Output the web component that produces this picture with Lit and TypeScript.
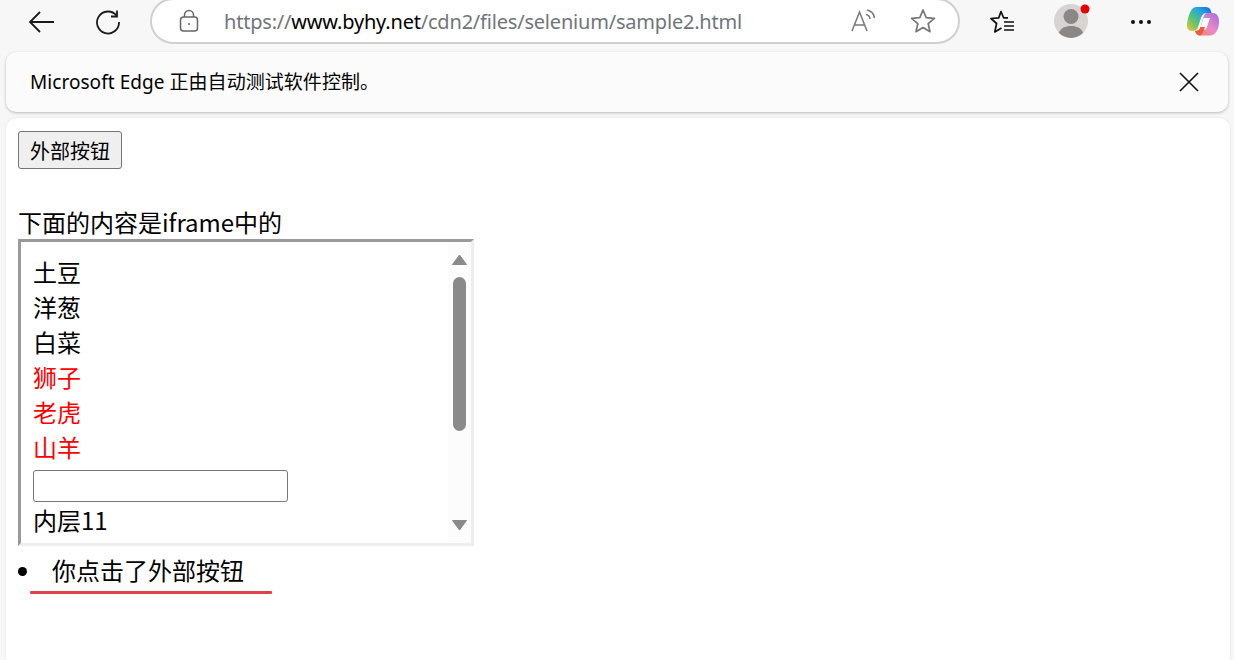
import { LitElement, html, css, svg } from "lit";
import { customElement } from "lit/decorators.js";

@customElement("app-root")
export class AppRoot extends LitElement {
  static styles = css`
    :host { display: block; width: 1234px; height: 660px; overflow: hidden; background: #f7f7f7; font-family: "Noto Sans", "Noto Sans CJK SC", sans-serif; color: #000; }
    .toolbar { height: 44px; display: flex; align-items: center; }
    .icon { display: block; flex: none; }
    .back { margin-left: 28px; }
    .reload { margin-left: 39px; }
    .omni { box-sizing: border-box; flex: none; align-self: flex-end; height: 46px; width: 810px; margin-left: 29px; border: 2px solid #d0d0d0; border-radius: 23px; background: #fff; display: flex; align-items: center; padding-left: 27px; }
    .url { margin-left: 25px; font-size: 20px; letter-spacing: -0.2px; color: #70757a; white-space: nowrap; line-height: 28px; margin-top: 2px; }
    .url b { font-weight: 400; color: #000; }
    .read { margin-left: auto; }
    .star { margin-left: 35px; margin-right: 22px; }
    .favs { margin-left: 29px; }
    .avatar { margin-left: 39px; }
    .more { margin-left: 40px; }
    .copilot { margin-left: 34px; margin-top: -2px; }
    .infobar { box-sizing: border-box; margin: 8px 6px 0; height: 60px; background: #fbfbfb; border-radius: 10px; box-shadow: 0 1px 3px rgba(0,0,0,.25); display: flex; align-items: center; justify-content: space-between; padding: 0 29px 0 24px; }
    .infobar span { font-size: 19px; line-height: 26px; letter-spacing: 0.05px; }
    .page { box-sizing: border-box; margin: 6px 4px 0 6px; height: 560px; background: #fff; border-radius: 10px 10px 0 0; padding: 13px 12px 0; box-shadow: 0 0 2px rgba(0,0,0,.12); }
    .btn { display: block; box-sizing: border-box; width: 104px; height: 38px; padding: 0; background: #efefef; border: 1px solid #767676; border-radius: 3px; font: 20px/29px "Noto Sans CJK SC", sans-serif; color: #000; }
    .caption { margin-top: 39px; height: 31px; font: 24px/27px "Noto Sans CJK SC", sans-serif; white-space: nowrap; }
    .frame { box-sizing: border-box; position: relative; width: 456px; height: 307px; border: 3px solid; border-color: #9a9a9a #eeeeee #eeeeee #9a9a9a; overflow: hidden; background: #fff; padding: 12px 0 0 12px; font: 24px/35px "Noto Sans CJK SC", sans-serif; }
    .row { height: 35px; white-space: nowrap; }
    .red { color: #f00; }
    .input { box-sizing: border-box; width: 255px; height: 32px; margin: 6px 0 0; border: 1px solid #767676; border-radius: 3px; background: #fff; }
    .sb { position: absolute; top: 0; right: 0; bottom: 0; width: 23px; background: #fcfcfc; display: flex; flex-direction: column; align-items: center; }
    .arrow-up { margin-top: 12px; }
    .thumb { width: 13px; height: 154px; margin-top: 12px; background: #8a8a8a; border-radius: 7px; }
    .arrow-down { margin-top: auto; margin-bottom: 12px; }
    ul { list-style: none; margin: 0; padding: 6px 0 0 0; }
    li { position: relative; height: 36px; display: flex; align-items: center; padding-left: 34px; font: 24px/36px "Noto Sans CJK SC", sans-serif; white-space: nowrap; }
    .bullet { position: absolute; left: 0; top: 50%; width: 9px; height: 9px; margin-top: -3px; background: #000; border-radius: 50%; }
    .mark { position: absolute; left: 12px; top: 39px; width: 242px; height: 3px; background: #e2404a; border-radius: 1px; }
  `;

  render() {
    return html`
      <div class="toolbar">
        <svg class="icon back" width="28" height="28" viewBox="0 0 28 28" fill="none" stroke="#1a1a1a" stroke-width="1.8"><path d="M2 14H26M12 4L2 14L12 24"/></svg>
        <svg class="icon reload" width="26" height="26" viewBox="0 0 26 26" fill="none" stroke="#1a1a1a" stroke-width="1.8"><path d="M21.5 6.500A11 11 0 1 0 24 13"/><path d="M22 1.500V7.500H16"/></svg>
        <div class="omni">
          <svg class="icon" width="20" height="24" viewBox="0 0 20 24" fill="none" stroke="#666" stroke-width="1.5"><rect x="1.500" y="8" width="17" height="14" rx="3"/><path d="M5.500 8V6a4.500 4.500 0 0 1 9 0V8"/><circle cx="10" cy="15" r="1" fill="#666" stroke="none"/></svg>
          <span class="url">https://<b>www.byhy.net</b>/cdn2/files/selenium/sample2.html</span>
          <svg class="icon read" width="24" height="24" viewBox="0 0 24 24" fill="none" stroke="#777" stroke-width="1.5"><path d="M1 22L8.500 3L16 22M3.600 16H13.400"/><path d="M15 5.500A5 5 0 0 1 19 10M16 1A9.500 9.500 0 0 1 23.500 9"/></svg>
          <svg class="icon star" width="26" height="26" viewBox="0 0 26 26" fill="none" stroke="#777" stroke-width="1.7" stroke-linejoin="round"><path d="M13 2L16.200 9.600L24.400 10.300L18.200 15.700L20 23.700L13 19.500L6 23.700L7.800 15.700L1.600 10.300L9.800 9.600Z"/></svg>
        </div>
        <svg class="icon favs" width="26" height="26" viewBox="0 0 26 26" fill="none" stroke="#111" stroke-width="1.7" stroke-linejoin="round"><path d="M19 8.800H14.600L12 2.500L9.800 8.800L2 9.500L7.600 14.500L5.800 23L12.500 19"/><path d="M15 13H25M15 17H25M15 21H25"/></svg>
        <svg class="icon avatar" width="36" height="38" viewBox="0 0 36 38"><circle cx="17" cy="18" r="17" fill="#d6d5d3"/><circle cx="17" cy="13.500" r="7.500" fill="#8b8785"/><path d="M4.800 29.800C7 25 11 23 17 23S27 25 29.200 29.800A17 17 0 0 1 4.800 29.800Z" fill="#8b8785"/><circle cx="31" cy="6" r="4.500" fill="#e60000"/></svg>
        <svg class="icon more" width="22" height="6" viewBox="0 0 22 6"><circle cx="3" cy="3" r="2" fill="#111"/><circle cx="11" cy="3" r="2" fill="#111"/><circle cx="19" cy="3" r="2" fill="#111"/></svg>
        ${this.copilot()}
      </div>
      <div class="infobar">
        <span>Microsoft Edge 正由自动测试软件控制。</span>
        <svg class="icon" width="20" height="20" viewBox="0 0 20 20" stroke="#111" stroke-width="1.6"><path d="M1 1L19 19M19 1L1 19"/></svg>
      </div>
      <div class="page">
        <button class="btn">外部按钮</button>
        <div class="caption">下面的内容是iframe中的</div>
        <div class="frame">
          <div class="row">土豆</div>
          <div class="row">洋葱</div>
          <div class="row">白菜</div>
          <div class="row red">狮子</div>
          <div class="row red">老虎</div>
          <div class="row red">山羊</div>
          <div class="input"></div>
          <div class="row">内层11</div>
          <div class="sb">
            <svg class="icon arrow-up" width="15" height="11" viewBox="0 0 15 11"><path d="M7.500 1L14.500 10.500H.5Z" fill="#8a8a8a" stroke="#8a8a8a" stroke-linejoin="round"/></svg>
            <div class="thumb"></div>
            <svg class="icon arrow-down" width="15" height="11" viewBox="0 0 15 11"><path d="M7.500 10L14.500 .5H.5Z" fill="#8a8a8a" stroke="#8a8a8a" stroke-linejoin="round"/></svg>
          </div>
        </div>
        <ul>
          <li><span class="bullet"></span>你点击了外部按钮<span class="mark"></span></li>
        </ul>
      </div>
    `;
  }

  copilot() {
    return svg`<svg class="icon copilot" width="34" height="30" viewBox="0 1 34 30">
      <defs>
        <linearGradient id="c1" x1="0" y1="1" x2="1" y2="0"><stop offset="0" stop-color="#f5c431"/><stop offset=".35" stop-color="#5fc56e"/><stop offset=".7" stop-color="#1fa5e8"/><stop offset="1" stop-color="#1a5fd6"/></linearGradient>
        <linearGradient id="c2" x1="0" y1="1" x2="1" y2="0"><stop offset="0" stop-color="#f5805a"/><stop offset=".5" stop-color="#e98ac8"/><stop offset="1" stop-color="#a06be0"/></linearGradient>
      </defs>
      <path d="M10 2H20C23 2 25 4 25.500 8L21 8C17.500 8 16 10 15 13L12 22C11 25 9 26 6 26C2 26 .5 23 1 19C2 11 5 2 10 2Z" fill="url(#c1)"/>
      <path d="M21 8H27C31 8 33.500 12 33 18C32.500 25 29 30.500 24 30.500H14C11.500 30.500 10 29 9 26C12 26 13.500 25 14.500 22L17 13C18 10 19 8 21 8Z" fill="url(#c2)"/>
      <path d="M17.500 13H24L20 24.500H14Z" fill="#fff"/>
      <path d="M9 26C12 26 13.500 25 14.500 22H19L17 27C16 29 15 30.500 14 30.500C12 30.500 10 29 9 26Z" fill="#ef5a3c"/>
    </svg>`;
  }
}
